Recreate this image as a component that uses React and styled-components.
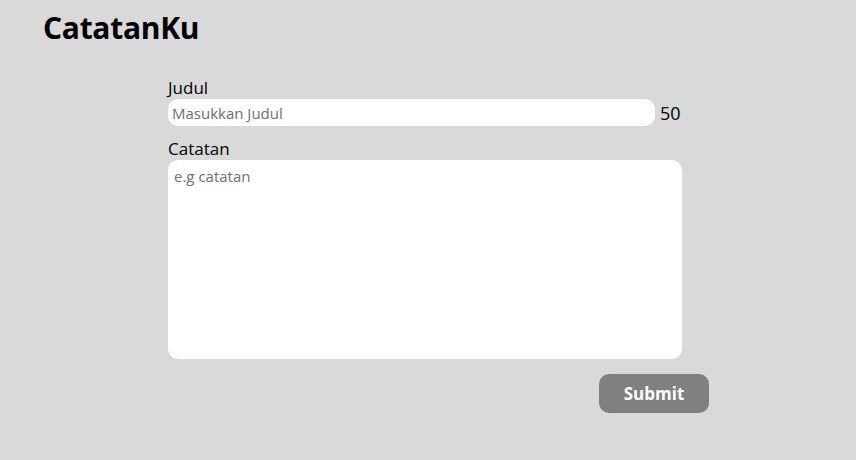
import React from "react";
import styled, { createGlobalStyle } from "styled-components";

const Global = createGlobalStyle`
  html, body { margin: 0; padding: 0; background: #d9d9d9; }
  body { font-family: "Open Sans", "Noto Sans", sans-serif; color: #000; }
  * { box-sizing: border-box; }
`;

const Page = styled.div`
  width: 856px;
  height: 460px;
  background: #d9d9d9;
  display: flex;
  flex-direction: column;
`;

const Title = styled.h1`
  margin: 0;
  padding: 8px 0 0 43px;
  font-size: 30px;
  font-weight: 700;
  line-height: 40px;
  letter-spacing: -0.3px;
`;

const Form = styled.form`
  margin: 30px 0 0 168px;
  width: 541px;
  display: flex;
  flex-direction: column;
`;

const Label = styled.label`
  font-size: 17px;
  line-height: 20px;
  margin-bottom: 1px;
`;

const Row = styled.div`
  display: flex;
  align-items: center;
  gap: 5px;
  margin-bottom: 13px;
`;

const Input = styled.input`
  width: 487px;
  height: 27px;
  border: none;
  outline: none;
  border-radius: 10px;
  background: #fff;
  padding: 0 4px;
  font-family: inherit;
  font-size: 15px;
  &::placeholder { color: #6f6f6f; }
`;

const Counter = styled.span`
  font-size: 18px;
`;

const TextArea = styled.textarea`
  width: 514px;
  height: 199px;
  border: none;
  outline: none;
  resize: none;
  border-radius: 10px;
  background: #fff;
  padding: 6px 6px;
  font-family: inherit;
  font-size: 15px;
  &::placeholder { color: #6f6f6f; }
`;

const Actions = styled.div`
  display: flex;
  justify-content: flex-end;
  margin-top: 15px;
`;

const Button = styled.button`
  width: 110px;
  height: 39px;
  border: none;
  border-radius: 10px;
  background: #808080;
  color: #fff;
  font-family: inherit;
  font-size: 17px;
  font-weight: 700;
  cursor: pointer;
`;

export default function App() {
  return (
    <Page>
      <Global />
      <Title>CatatanKu</Title>
      <Form onSubmit={(e) => e.preventDefault()}>
        <Label htmlFor="judul">Judul</Label>
        <Row>
          <Input id="judul" placeholder="Masukkan Judul" />
          <Counter>50</Counter>
        </Row>
        <Label htmlFor="catatan">Catatan</Label>
        <TextArea id="catatan" placeholder="e.g catatan" />
        <Actions>
          <Button type="submit">Submit</Button>
        </Actions>
      </Form>
    </Page>
  );
}
